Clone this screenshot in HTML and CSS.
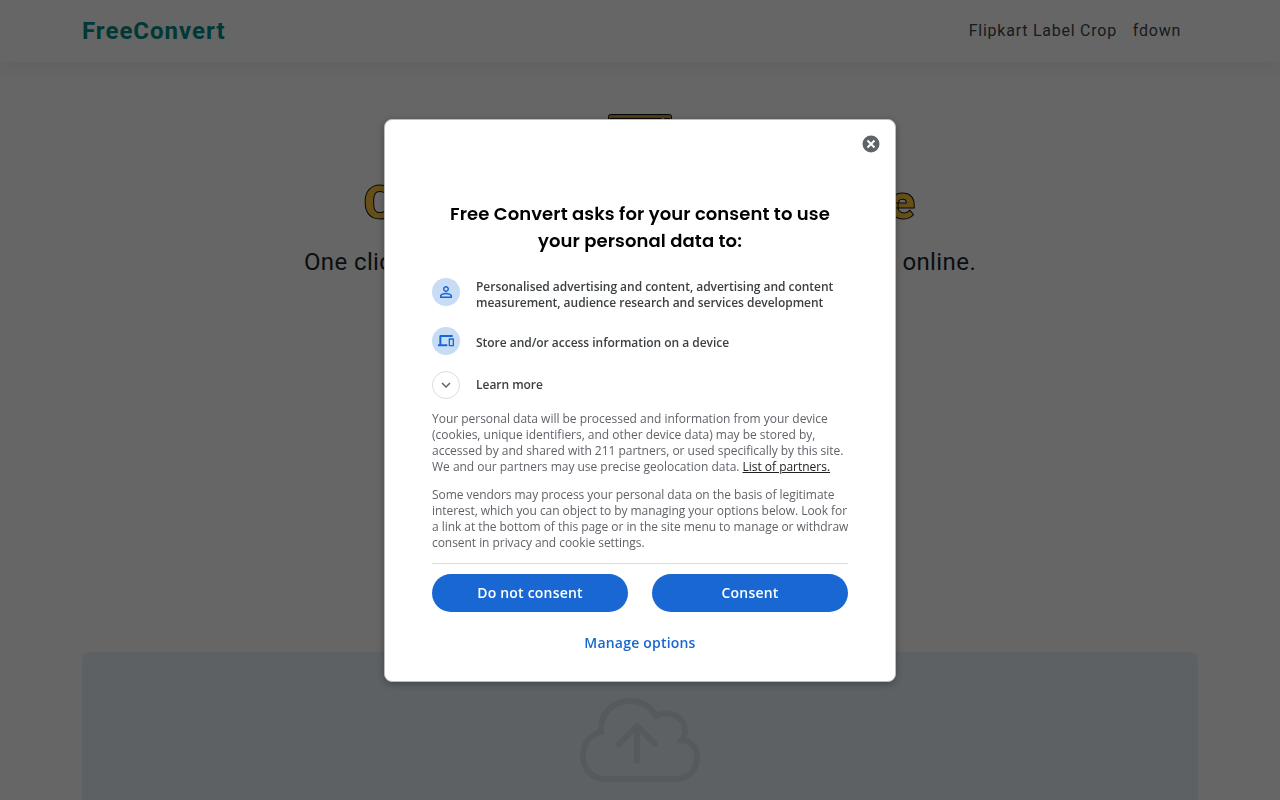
FILE: index.html
```html
<!DOCTYPE html>
<html lang="en">
<head>
    <title>Free Convert</title>
    <meta charset="UTF-8">
    <meta name="viewport" content="width=device-width, initial-scale=1.0">
    <link rel="stylesheet" href="styles.css">
</head>
<body>
    <header class="header">
        <div class="container nav">
            <a class="brand">FreeConvert</a>
            <nav class="nav-links">
                <a>Flipkart Label Crop</a>
                <a>fdown</a>
            </nav>
        </div>
    </header>

    <main class="container main">
        <svg class="hero-icon" width="64" height="64" viewBox="0 0 64 64">
            <rect x=".5" y=".5" width="63" height="63" rx="2" fill="#c79a2c" stroke="#111"/>
            <rect x="2.5" y="4.500" width="59" height="56" fill="#222" stroke="#111"/>
            <circle cx="55" cy="5" r="1.500" fill="#9bb"/>
        </svg>
        <h1>Crop Labels Online Free</h1>
        <p class="lead">One click to crop all your shipping label pages for free online.</p>

        <div class="upload">
            <svg width="120" height="86" viewBox="0 0 120 86" fill="none" stroke="#d7e1e8" stroke-width="6">
                <path d="M21 34C20 14 34 3 50 3C62 3 71 9 76 18C90 11 105 19 105 34C105 37 104 39 102 42C111 43 117 50 117 59C117 72 108 81 96 81H26C12 81 3 71 3 58C3 45 11 36 21 34Z"/>
                <path d="M57 63V28M39 46L57 28L75 46" stroke-linecap="round" stroke-linejoin="round"/>
            </svg>
        </div>
    </main>

    <div class="overlay">
        <div class="dialog">
            <button class="close">
                <svg width="18" height="18" viewBox="0 0 18 18">
                    <circle cx="9" cy="9" r="8.500" fill="#5f6368"/>
                    <path d="M5.500 5.500L12.500 12.500M12.500 5.500L5.500 12.500" stroke="#fff" stroke-width="2"/>
                </svg>
            </button>

            <h2>Free Convert asks for your consent to use your personal data to:</h2>

            <ul class="purposes">
                <li>
                    <span class="icon">
                        <svg width="18" height="18" viewBox="0 0 24 24" fill="#1967d2"><path d="M12 5.900a2.100 2.100 0 1 1 0 4.200 2.100 2.100 0 0 1 0-4.200m0 9c2.970 0 6.100 1.460 6.100 2.100v1.100H5.900V17c0-.64 3.130-2.100 6.100-2.100M12 4C9.790 4 8 5.790 8 8s1.790 4 4 4 4-1.790 4-4-1.790-4-4-4zm0 9c-2.670 0-8 1.340-8 4v3h16v-3c0-2.660-5.330-4-8-4z"/></svg>
                    </span>
                    <span>Personalised advertising and content, advertising and content measurement, audience research and services development</span>
                </li>
                <li>
                    <span class="icon">
                        <svg width="16" height="16" viewBox="0 0 24 24" fill="#1967d2"><path d="M4 6h18V3H4c-1.100 0-2 .9-2 2v12H0v3h14v-3H5V6zm19 2h-6c-.55 0-1 .45-1 1v10c0 .55.45 1 1 1h6c.55 0 1-.45 1-1V9c0-.55-.45-1-1-1zm-1 10h-4v-8h4v8z"/></svg>
                    </span>
                    <span>Store and/or access information on a device</span>
                </li>
                <li>
                    <span class="icon icon-outline">
                        <svg width="18" height="18" viewBox="0 0 24 24" fill="#5f6368"><path d="M16.590 8.590L12 13.170 7.410 8.590 6 10l6 6 6-6z"/></svg>
                    </span>
                    <span>Learn more</span>
                </li>
            </ul>

            <div class="details">
                <p>Your personal data will be processed and information from your device (cookies, unique identifiers, and other device data) may be stored by, accessed by and shared with 211 partners, or used specifically by this site. We and our partners may use precise geolocation data. <a>List of partners.</a></p>
                <p>Some vendors may process your personal data on the basis of legitimate interest, which you can object to by managing your options below. Look for a link at the bottom of this page or in the site menu to manage or withdraw consent in privacy and cookie settings.</p>
            </div>

            <div class="actions">
                <button class="btn">Do not consent</button>
                <button class="btn">Consent</button>
            </div>
            <button class="manage">Manage options</button>
        </div>
    </div>
</body>
</html>
```
FILE: styles.css
```css
* {
    box-sizing: border-box;
}

body {
    display: flex;
    flex-direction: column;
    margin: 0;
    height: 100vh;
    overflow: hidden;
    background-color: #fff;
    color: #212529;
    font-family: Roboto, sans-serif;
}

.container {
    width: 1140px;
    margin: 0 auto;
    padding: 0 12px;
}

.header {
    flex: none;
    height: 62px;
    box-shadow: 0 8px 16px rgba(0, 0, 0, 0.05);
}

.nav {
    display: flex;
    align-items: center;
    justify-content: space-between;
    height: 62px;
}

.brand {
    color: #008c87;
    font-size: 24px;
    font-weight: 700;
    letter-spacing: 1px;
}

.nav-links {
    display: flex;
    gap: 16px;
    padding: 0 17px 2px 0;
    font-size: 16px;
    letter-spacing: 0.75px;
    color: #444;
}

.main {
    display: flex;
    flex: 1;
    flex-direction: column;
    align-items: center;
    min-height: 0;
    padding-top: 52px;
}

.hero-icon {
    flex: none;
}

h1 {
    flex: none;
    margin: 0;
    height: 66px;
    line-height: 50px;
    font-size: 49px;
    font-weight: 900;
    letter-spacing: 1.1px;
    white-space: nowrap;
    color: #ffc83d;
    -webkit-text-stroke: 1px #111;
}

.lead {
    flex: none;
    margin: 0;
    height: 408px;
    font-size: 24px;
    line-height: 36px;
    letter-spacing: 0.4px;
    white-space: nowrap;
}

.upload {
    flex: 1;
    width: 100%;
    min-height: 0;
    padding-top: 46px;
    border-radius: 8px 8px 0 0;
    background-color: #e9f3fa;
    text-align: center;
}

.overlay {
    position: fixed;
    inset: 0;
    display: flex;
    align-items: center;
    justify-content: center;
    background-color: rgba(0, 0, 0, 0.6);
}

.dialog {
    position: relative;
    width: 512px;
    height: 563px;
    margin-top: 1px;
    padding: 80px 47px 0;
    border: 1px solid #bdbdbd;
    border-radius: 8px;
    background-color: #fff;
    box-shadow: 0 2px 8px rgba(0, 0, 0, 0.3);
    font-family: "Open Sans", sans-serif;
}

button {
    border: none;
    background: none;
    padding: 0;
    font-family: inherit;
    cursor: pointer;
}

.close {
    position: absolute;
    top: 15px;
    right: 15px;
    width: 18px;
    height: 18px;
}

.close svg {
    display: block;
}

h2 {
    margin: 0 0 24px;
    font-family: Poppins, Inter, sans-serif;
    font-size: 18px;
    line-height: 27px;
    font-weight: 600;
    letter-spacing: 0.08px;
    text-align: center;
    color: #000;
}

.purposes {
    margin: 0;
    padding: 0;
    list-style: none;
    font-size: 12px;
    line-height: 16px;
    font-weight: 600;
    letter-spacing: -0.03px;
    color: #3c4043;
}

.purposes li {
    display: flex;
    gap: 16px;
    align-items: flex-start;
    margin-bottom: 16px;
}

.purposes li > span:last-child {
    padding-top: 8px;
}

.purposes li:first-child > span:last-child {
    padding-top: 1px;
}

.purposes li:last-child {
    margin-bottom: 12px;
}

.purposes li:last-child > span:last-child {
    padding-top: 6px;
}

.icon {
    display: flex;
    flex: none;
    align-items: center;
    justify-content: center;
    width: 28px;
    height: 28px;
    border-radius: 50%;
    background-color: #c8dcf6;
}

.icon-outline {
    border: 1px solid #dadce0;
    background-color: #fff;
}

.details {
    border-bottom: 1px solid #dadce0;
    font-size: 12px;
    line-height: 16px;
    letter-spacing: -0.02px;
    color: #5f6368;
}

.details p {
    margin: 0 -3px 12px 0;
}

.details p:last-child {
    letter-spacing: -0.05px;
}

.details a {
    color: #202124;
    text-decoration: underline;
}

.actions {
    display: flex;
    gap: 24px;
    margin-top: 10px;
}

.btn {
    flex: 1;
    height: 38px;
    padding-bottom: 2px;
    border-radius: 19px;
    background-color: #1967d2;
    color: #fff;
    font-size: 14px;
    font-weight: 600;
    letter-spacing: 0.2px;
}

.manage {
    display: block;
    margin: 21px auto 0;
    color: #1967d2;
    font-size: 14px;
    line-height: 20px;
    font-weight: 600;
    letter-spacing: 0.2px;
}
```
